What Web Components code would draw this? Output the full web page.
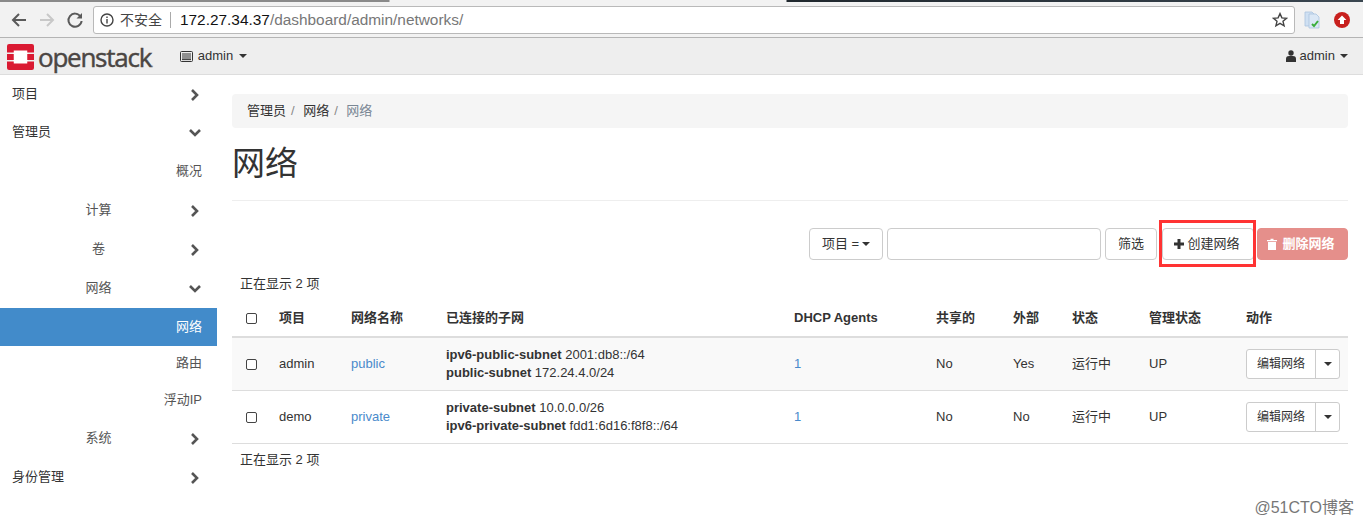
<!DOCTYPE html>
<html><head><meta charset="utf-8">
<style>
html,body{margin:0;padding:0;background:#fff;overflow:hidden;height:525px}
body{font:13px/1.43 "Liberation Sans","Noto Sans CJK SC",sans-serif;color:#333;position:relative}
</style></head><body>
<template id="t-chrome"><style>
:host{display:flex;flex-direction:column;height:38px;background:#f2f2f2;box-sizing:border-box;border-bottom:1px solid #b4b4b4}
.tabs{height:2px;background:linear-gradient(90deg,#8a8a8a 0,#8a8a8a 389px,#f2f2f2 390px,#f2f2f2 786px,#20282e 787px,#3a4650 1363px)}
.row{flex:1;display:flex;align-items:center;padding:0 0 0 10px;gap:0}
.ic{width:18px;height:18px;flex:none;display:block}
.nav{display:flex;gap:10px;margin-right:9px}
.url{width:1202px;height:28px;box-sizing:border-box;border:1px solid #b9b9b9;border-radius:3px;background:#fff;display:flex;align-items:center;padding:0 6px 0 6px;font-size:15.4px;color:#333;margin-top:1px}
.sec{margin:0 8px 0 6px;font-size:14px;color:#444}
.bar{width:1px;height:16px;background:#aaa;margin-right:9px}
.host{color:#111}.path{color:#777}
.sp{flex:1}
.ext{display:flex;margin-left:9px;gap:14px;align-items:center}
</style><div class="tabs"></div><div class="row">
<div class="nav">
<svg class="ic" viewBox="0 0 18 18" fill="none" stroke="#5a5a5a" stroke-width="2"><path d="M16 9H3M9 3L3 9l6 6"/></svg>
<svg class="ic" viewBox="0 0 18 18" fill="none" stroke="#c8c8c8" stroke-width="2"><path d="M2 9h13M9 3l6 6-6 6"/></svg>
<svg class="ic" viewBox="0 0 18 18" fill="none" stroke="#5a5a5a" stroke-width="2"><path d="M14.500 5.500A6.600 6.600 0 1 0 15.600 10"/><path d="M16 2v5.500h-5.500z" fill="#5a5a5a" stroke="none"/></svg>
</div>
<div class="url">
<svg width="14" height="14" viewBox="0 0 14 14" fill="none" stroke="#444" stroke-width="1.400"><circle cx="7" cy="7" r="6"/><path d="M7 6v4.400M7 3.400v1.600"/></svg>
<span class="sec">不安全</span><span class="bar"></span><span><span class="host">172.27.34.37</span><span class="path">/dashboard/admin/networks/</span></span>
<span class="sp"></span>
<svg width="16" height="16" viewBox="0 0 16 16" fill="none" stroke="#444" stroke-width="1.400"><path d="M8 1.600l1.900 4.300 4.600.4-3.500 3 1.100 4.600L8 11.400l-4.100 2.500L5 9.300l-3.500-3 4.600-.4z"/></svg>
</div>
<div class="ext">
<svg width="16" height="18" viewBox="0 0 16 18"><path d="M1 1h7l3 3v11H1z" fill="#cfe0f2" stroke="#aac3de" stroke-width=".8"/><path d="M5 3h7l3 3v11H5z" fill="#dbe8f6" stroke="#aac3de" stroke-width=".8"/><path d="M8 13l2 2 4-5" fill="none" stroke="#3cae3c" stroke-width="2"/></svg>
<svg width="16" height="16" viewBox="0 0 16 16"><circle cx="8" cy="8" r="8" fill="#c8201e"/><path d="M8 3.400L12.400 8H10v4H6V8H3.600z" fill="#fff"/></svg>
</div>
</div></template>

<template id="t-navbar"><style>
:host{display:flex;align-items:center;height:37px;background:#eee;border-bottom:1px solid #ddd;box-sizing:border-box;padding:1px 15px 0 7px;color:#333}
.logo{display:block;flex:none;width:27px;height:26px}
.brand{font:400 26px/1 "Open Sans",sans-serif;color:#4b4643;margin-left:4px;letter-spacing:-1.25px;-webkit-text-stroke:.45px #4b4643}
.brand i{font-style:normal;font-size:10px;color:#888;letter-spacing:0;-webkit-text-stroke:0}
.proj{margin-left:26px;display:flex;align-items:center;gap:5px}
.sp{flex:1}
.user{display:flex;align-items:center;gap:4px}
.caret{width:0;height:0;border:4px solid transparent;border-top-color:#333;border-bottom:0;margin-left:1px}
</style>
<svg class="logo" viewBox="0 0 26 26" preserveAspectRatio="none"><rect x="6" y="6" width="14" height="14" fill="#fff"/><path d="M2 0h22a2 2 0 0 1 2 2v6.500h-6.500V6.500H6.500v2H0V2a2 2 0 0 1 2-2z" fill="#da1a32"/><path d="M0 17.500h6.500v2h13v-2H26V24a2 2 0 0 1-2 2H2a2 2 0 0 1-2-2z" fill="#da1a32"/><path d="M0 10h6.500v6H0zM19.500 10H26v6h-6.500z" fill="#da1a32"/></svg>
<span class="brand">openstack<i>.</i></span>
<span class="proj"><svg width="13" height="11" viewBox="0 0 13 11"><rect x=".5" y=".5" width="12" height="10" rx="1" fill="none" stroke="#333"/><path d="M2 3h9M2 5h9M2 7h9M2 8.600h9" stroke="#333"/></svg><span>admin</span><span class="caret"></span></span>
<span class="sp"></span>
<span class="user"><svg width="10" height="12" viewBox="0 0 10 12"><circle cx="5" cy="3" r="2.700" fill="#333"/><path d="M0 12V8.500C0 6.800 1.500 6 3 6h4c1.500 0 3 .8 3 2.500V12z" fill="#333"/></svg><span>admin</span><span class="caret"></span></span>
</template>

<template id="t-item"><style>
:host{display:flex;align-items:center;height:38px;color:#555;box-sizing:border-box}
:host([top]){color:#333}
.lab{flex:1;text-align:right;padding-right:15px}
:host([top]) .lab{text-align:left;padding:0 0 0 12px}
:host([sub]) .lab{flex:none;width:97px;padding:0;text-align:center;margin-left:50px}
.chev{position:absolute;left:189px;width:12px;height:12px;margin-top:1px}
:host([active]){background:#428bca;color:#fff}
svg{display:block}
</style><span class="lab"><slot></slot></span><span class="chev" id="c"></span></template>

<template id="t-crumb"><style>
:host{display:flex;align-items:center;height:34px;background:#f5f5f5;border-radius:4px;padding:0 15px;box-sizing:border-box;color:#333}
.s{color:#888;padding:0 8.500px 0 5px}.a{color:#7a8794}
</style><span>管理员</span><span class="s">/</span><span>网络</span><span class="s">/</span><span class="a">网络</span></template>

<template id="t-btn"><style>
:host{display:inline-flex;align-items:center;justify-content:center;box-sizing:border-box;height:32px;background:#fff;border:1px solid #ccc;border-radius:4px;color:#333;white-space:nowrap}
:host([danger]){background:#e58f8b;border-color:#e58f8b;color:#fff;font-weight:700}
</style><slot></slot></template>

<template id="t-split"><style>
:host{display:inline-flex;height:30px;width:94px;box-sizing:border-box;border:1px solid #ccc;border-radius:3px;background:#fff;font-size:12px;color:#333}
.a{width:68px;display:flex;align-items:center;justify-content:center;border-right:1px solid #ccc;flex:none}
.b{flex:1;display:flex;align-items:center;justify-content:center}
.c{width:0;height:0;border:4px solid transparent;border-top-color:#333;border-bottom:0}
</style><span class="a">编辑网络</span><span class="b"><span class="c"></span></span></template>

<template id="t-toolbar"><style>
:host{display:flex;justify-content:flex-end;align-items:center;height:32px}
.f{width:74px}
.i{width:214px;height:32px;box-sizing:border-box;border:1px solid #ccc;border-radius:4px;margin:0 4px;background:#fff}
.caret{width:0;height:0;border:4px solid transparent;border-top-color:#333;border-bottom:0;margin-left:3px}
svg{flex:none}
.wrap{position:relative;margin:0 3px 0 5px;display:flex}
.red{position:absolute;left:-3px;top:-8px;border:3px solid #f33;box-sizing:border-box;pointer-events:none;width:97px;height:47px}
</style>
<os-btn class="f">项目 =<span class="caret"></span></os-btn><span class="i"></span><os-btn style="width:52px">筛选</os-btn>
<span class="wrap"><os-btn style="width:92px"><svg width="10" height="10" viewBox="0 0 10 10" style="margin-right:3px;margin-left:-2px"><path d="M3.500 0h3v3.500H10v3H6.500V10h-3V6.500H0v-3h3.500z" fill="#333"/></svg>创建网络</os-btn><span class="red"></span></span>
<os-btn danger style="width:91px"><svg width="10" height="12" viewBox="0 0 10 12" style="margin-right:5px;margin-left:-3px"><path d="M0 2h3.500V.8h3V2H10v1.200H0zM1 4h8v8H1z" fill="#fff"/></svg>删除网络</os-btn>
</template>

<template id="t-table"><style>
:host{display:block}
table{border-collapse:collapse;table-layout:fixed;width:1116px;color:#333}
th,td{padding:0 0 0 8px;text-align:left;vertical-align:middle;line-height:18px}
th{height:36px;border-bottom:2px solid #ddd;font-weight:700;color:#333}
td{height:52px;border-bottom:1px solid #ddd}
tbody tr:nth-child(odd) td{background:#f9f9f9}
a{color:#4a8acb;text-decoration:none}
b{font-weight:700}
.cb{width:9px;height:9px;border:1px solid #444;border-radius:2px;display:block;margin-left:6px;background:#fff}
</style><table>
<colgroup><col style="width:39px"><col style="width:72px"><col style="width:95px"><col style="width:348px"><col style="width:142px"><col style="width:77px"><col style="width:59px"><col style="width:77px"><col style="width:97px"><col style="width:110px"></colgroup>
<thead><tr><th><span class="cb"></span></th><th>项目</th><th>网络名称</th><th>已连接的子网</th><th>DHCP Agents</th><th>共享的</th><th>外部</th><th>状态</th><th>管理状态</th><th>动作</th></tr></thead>
<tbody>
<tr><td><span class="cb"></span></td><td>admin</td><td><a>public</a></td><td><b>ipv6-public-subnet</b> 2001:db8::/64<br><b>public-subnet</b> 172.24.4.0/24</td><td><a>1</a></td><td>No</td><td>Yes</td><td>运行中</td><td>UP</td><td><os-split></os-split></td></tr>
<tr><td><span class="cb"></span></td><td>demo</td><td><a>private</a></td><td><b>private-subnet</b> 10.0.0.0/26<br><b>ipv6-private-subnet</b> fdd1:6d16:f8f8::/64</td><td><a>1</a></td><td>No</td><td>No</td><td>运行中</td><td>UP</td><td><os-split></os-split></td></tr>
</tbody></table></template>

<template id="t-page"><style>
:host{display:flex;height:450px}
nav{width:217px;flex:none;position:relative}
main{width:1116px;margin-left:15px;padding-top:19px;box-sizing:content-box}
h1{font:400 33px/1.1 "Liberation Sans","Noto Sans CJK SC",sans-serif;margin:0;padding:18px 0 16px;height:38px;color:#333;border-bottom:1px solid #eee;box-sizing:content-box}
.count{padding:0 8px;line-height:18px}
os-toolbar{margin-top:27px}
.c1{margin-top:15px;margin-bottom:7px}
.c2{margin-top:7px}
</style>
<nav><slot name="nav"></slot></nav>
<main><os-crumb></os-crumb><h1>网络</h1><os-toolbar></os-toolbar><div class="count c1">正在显示 2 项</div><os-table></os-table><div class="count c2">正在显示 2 项</div></main>
</template>

<template id="t-mark"><style>
:host{position:absolute;right:9px;bottom:9px;font:16px/1 "Liberation Sans","Noto Sans CJK SC",sans-serif;color:#777}
</style>@51CTO博客</template>

<os-chrome></os-chrome><os-navbar></os-navbar>
<os-page>
<div slot="nav">
<os-item top chev="r">项目</os-item>
<os-item top chev="d">管理员</os-item>
<os-item style="height:40px">概况</os-item>
<os-item sub chev="r">计算</os-item>
<os-item sub chev="r" style="height:40px">卷</os-item>
<os-item sub chev="d" style="height:39px">网络</os-item>
<os-item active>网络</os-item>
<os-item style="height:35px">路由</os-item>
<os-item>浮动IP</os-item>
<os-item sub chev="r" style="height:39px">系统</os-item>
<os-item top chev="r">身份管理</os-item>
</div>
</os-page>
<os-mark></os-mark>
<script>
const mk=(n,id,ext)=>customElements.define(n,class extends HTMLElement{constructor(){super();this.attachShadow({mode:"open"}).append(document.getElementById(id).content.cloneNode(true));}connectedCallback(){ext&&ext(this)}});
const chev={r:'<svg width="12" height="12" viewBox="0 0 12 12" fill="none" stroke="#555" stroke-width="2.600"><path d="M3 1l5 5-5 5"/></svg>',d:'<svg width="12" height="12" viewBox="0 0 12 12" fill="none" stroke="#555" stroke-width="2.600"><path d="M1 3l5 5 5-5"/></svg>'};
mk("os-chrome","t-chrome");mk("os-navbar","t-navbar");
mk("os-item","t-item",e=>{const c=e.getAttribute("chev");e.shadowRoot.getElementById("c").innerHTML=c?chev[c]:""});
mk("os-crumb","t-crumb");mk("os-btn","t-btn");mk("os-split","t-split");mk("os-toolbar","t-toolbar");mk("os-table","t-table");mk("os-page","t-page");mk("os-mark","t-mark");
</script>
</body></html>
